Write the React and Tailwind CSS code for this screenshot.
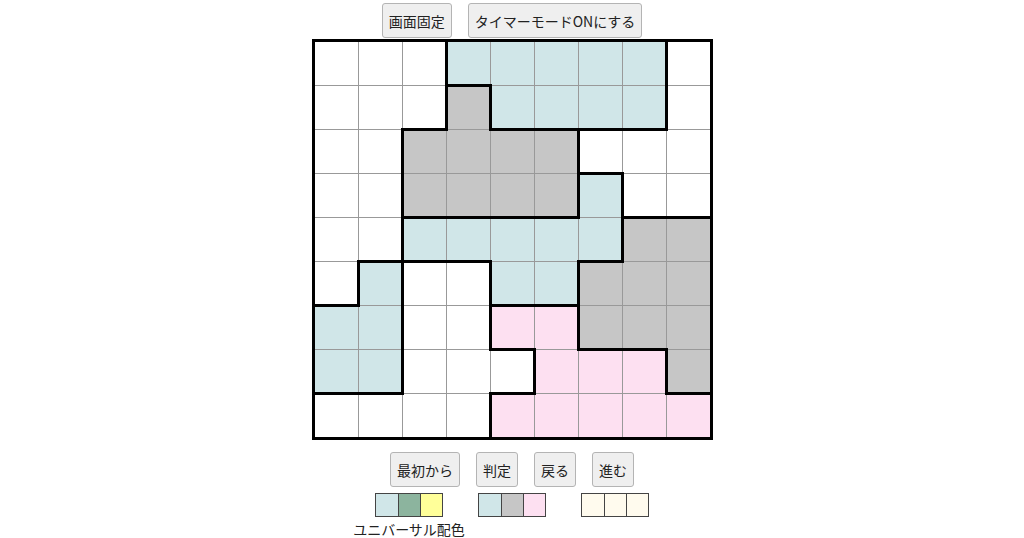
import React from "react";

// W = white, B = light blue, G = gray, P = pink
const BOARD = [
  "WWWBBBBBW",
  "WWWGBBBBW",
  "WWGGGGWWW",
  "WWGGGGBWW",
  "WWBBBBBGG",
  "WBWWBBGGG",
  "BBWWPPGGG",
  "BBWWWPPPG",
  "WWWWPPPPP",
];

const cellColor = {
  W: "bg-white",
  B: "bg-[#d0e6e8]",
  G: "bg-[#c6c6c6]",
  P: "bg-[#fde0f1]",
};

const font = { fontFamily: '"Noto Sans CJK JP", "Noto Sans", sans-serif' };

function Button({ children }) {
  return (
    <button className="h-[35px] px-[6px] rounded-[3px] border border-[#b4b4b4] bg-[#efefef] text-[14px] text-[#222] leading-none">
      {children}
    </button>
  );
}

function Cell({ r, c }) {
  const v = BOARD[r][c];
  const thickTop = r > 0 && BOARD[r - 1][c] !== v;
  const thickLeft = c > 0 && BOARD[r][c - 1] !== v;
  return (
    <div className={`relative w-[43px] h-[43px] ${cellColor[v]}`}>
      {thickTop && (
        <span className="absolute z-10 left-[-2px] top-[-2px] w-[47px] h-[3px] bg-black" />
      )}
      {thickLeft && (
        <span className="absolute z-10 left-[-2px] top-[-2px] w-[3px] h-[47px] bg-black" />
      )}
    </div>
  );
}

function Swatches({ colors }) {
  return (
    <div className="flex border border-[#444]">
      {colors.map((col, i) => (
        <div
          key={i}
          className={`w-[22px] h-[22px] ${col} ${i > 0 ? "border-l border-[#444]" : ""}`}
        />
      ))}
    </div>
  );
}

export default function App() {
  return (
    <div className="w-[1024px] h-[538px] bg-white overflow-hidden flex flex-col items-center pt-[3px]" style={font}>
      <div className="flex gap-[16px]">
        <Button>画面固定</Button>
        <Button>タイマーモードONにする</Button>
      </div>

      <div className="mt-[1px] border-[3px] border-black bg-[#999] grid grid-cols-9 gap-px">
        {BOARD.map((row, r) =>
          row.split("").map((_, c) => <Cell key={`${r}-${c}`} r={r} c={c} />)
        )}
      </div>

      <div className="mt-[12px] flex gap-[16px]">
        <Button>最初から</Button>
        <Button>判定</Button>
        <Button>戻る</Button>
        <Button>進む</Button>
      </div>

      <div className="mt-[6px] flex gap-[35px] items-start">
        <div className="flex flex-col items-center w-[67px]">
          <Swatches colors={["bg-[#d0e6e8]", "bg-[#8cb49e]", "bg-[#ffff99]"]} />
          <span className="mt-[5px] whitespace-nowrap text-[14px] text-[#222] leading-none">
            ユニバーサル配色
          </span>
        </div>
        <Swatches colors={["bg-[#d0e6e8]", "bg-[#c6c6c6]", "bg-[#fde0f1]"]} />
        <Swatches colors={["bg-[#fffbee]", "bg-[#fffbee]", "bg-[#fffbee]"]} />
      </div>
    </div>
  );
}
